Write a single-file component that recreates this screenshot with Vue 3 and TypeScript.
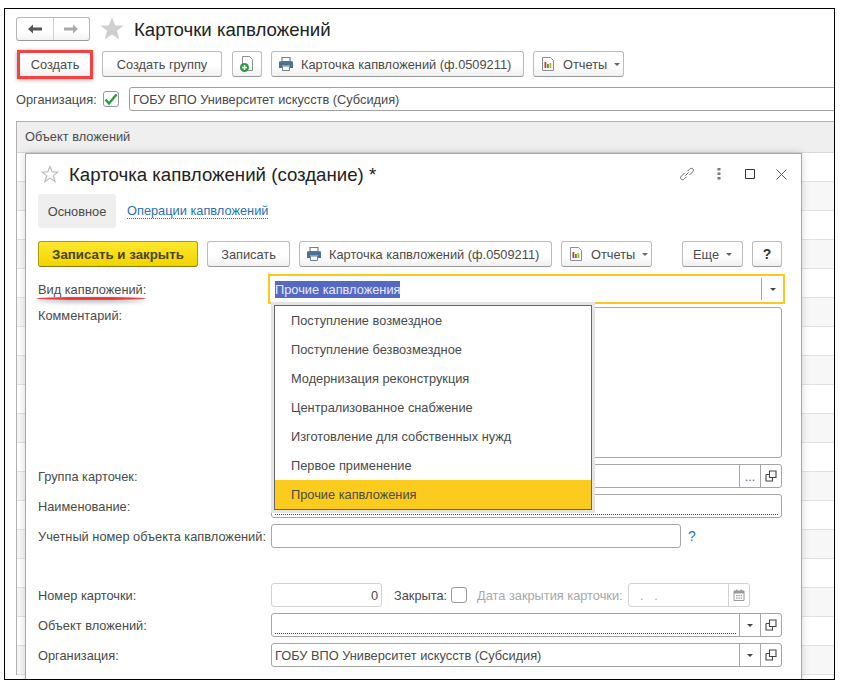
<template>
  <div class="frame">
    <svg class="defs" aria-hidden="true">
      <symbol id="printer" viewBox="0 0 16 16">
        <path d="M4 1.500h8v4H4z" fill="#fff" stroke="#6f8296" stroke-width="1.200" />
        <path d="M1 6.500c0-.8.500-1.200 1.200-1.200h11.600c.7 0 1.200.4 1.200 1.200V12h-3V9.500H4V12H1z" fill="#4a7299" />
        <path d="M4.500 10h7v4.500h-7z" fill="#fff" stroke="#6f8296" />
      </symbol>
      <symbol id="report" viewBox="0 0 16 16">
        <path d="M2.500 1.500h8l3 3v10h-11z" fill="#fff" stroke="#8a8f94" />
        <path d="M4.500 6h1.800v6H4.500z" fill="#c9342c" />
        <path d="M7 8h1.800v4H7z" fill="#3c9c35" />
        <path d="M9.500 7h1.800v5H9.500z" fill="#d9a514" />
      </symbol>
      <symbol id="open" viewBox="0 0 12 12">
        <path d="M4.500 1h6.500v6.500H4.500z M1 4.500h3.500 M1 4.500V11h6.500V7.500" fill="none" stroke="#444" stroke-width="1.100" />
      </symbol>
    </svg>

    <div class="nav-row">
      <div class="nav-buttons">
        <span class="nav-cell">
          <svg width="16" height="12" viewBox="0 0 16 12"><path d="M1 6l5-4.500V4.500h9v3H6v3z" fill="#555" /></svg>
        </span>
        <span class="nav-cell">
          <svg width="16" height="12" viewBox="0 0 16 12"><path d="M15 6l-5-4.500V4.500H1v3h9v3z" fill="#aaa" /></svg>
        </span>
      </div>
      <svg class="big-star" width="24" height="24" viewBox="0 0 24 24">
        <path d="M12 .5l3.300 8h8.400l-6.800 5.300 2.500 8.700L12 17.500l-7.400 5 2.500-8.700L.3 8.500h8.400z" fill="#cfcfcf" />
      </svg>
      <h1 class="title">Карточки капвложений</h1>
    </div>

    <div class="toolbar main-toolbar">
      <button class="btn btn-create">Создать</button>
      <button class="btn w-group">Создать группу</button>
      <button class="btn w-add">
        <svg width="16" height="18" viewBox="0 0 16 18">
          <path d="M3.500 1.500h7l3 3v11h-10z" fill="#fff" stroke="#8a8f94" />
          <circle cx="5.500" cy="12.500" r="4.500" fill="#2c9c3c" />
          <path d="M3 12.500h5M5.500 10v5" stroke="#fff" stroke-width="1.500" />
        </svg>
      </button>
      <button class="btn with-icon w-print">
        <svg class="ico" width="16" height="16"><use href="#printer" /></svg>
        Карточка капвложений (ф.0509211)
      </button>
      <button class="btn with-icon w-report">
        <svg class="ico" width="16" height="16"><use href="#report" /></svg>
        Отчеты
        <i class="caret"></i>
      </button>
    </div>

    <div class="org-row">
      <span class="org-label">Организация:</span>
      <span class="check checked">
        <svg width="14" height="13" viewBox="0 0 14 13"><path d="M1.500 6.500l3.500 4 7.500-9" fill="none" stroke="#1e9e46" stroke-width="2.400" /></svg>
      </span>
      <div class="org-input">ГОБУ ВПО Университет искусств (Субсидия)</div>
    </div>

    <div class="table">
      <div class="table-head">Объект вложений</div>
      <div v-for="n in 18" :key="n" class="table-row" :class="{ odd: n % 2 === 0 }"></div>
    </div>

    <div class="dialog">
      <div class="dialog-head">
        <svg class="small-star" width="18" height="18" viewBox="0 0 24 24">
          <path d="M12 2l3 7.300h7.500l-6 4.900 2.200 7.800-6.700-4.500L5.300 22l2.200-7.800-6-4.900H9z" fill="none" stroke="#bbb" stroke-width="1.600" />
        </svg>
        <h2 class="dialog-title">Карточка капвложений (создание) *</h2>
        <div class="win-icons">
          <svg width="16" height="16" viewBox="0 0 16 16">
            <path d="M6.500 9.500l3-3M5.500 7L2.500 10c-1.200 1.200-1.200 2.300-.4 3.100s2.200.9 3.400-.3l2-2M10.500 9l3-3c1.200-1.200 1.200-2.300.4-3.100s-2.200-.9-3.400.3l-2 2" fill="none" stroke="#666" />
          </svg>
          <svg class="dots" width="4" height="12" viewBox="0 0 4 12">
            <path d="M.5 0h3v2.500h-3zM.5 4.500h3V7h-3zM.5 9h3v2.500h-3z" fill="#777" />
          </svg>
          <svg class="square" width="10" height="10" viewBox="0 0 10 10"><path d="M.5.5h9v9h-9z" fill="none" stroke="#333" /></svg>
          <svg class="close" width="11" height="11" viewBox="0 0 11 11"><path d="M.5.500l10 10M10.500.500l-10 10" stroke="#555" /></svg>
        </div>
      </div>

      <div class="tabs">
        <span class="tab-active">Основное</span>
        <a class="tab-link">Операции капвложений</a>
      </div>

      <div class="toolbar dialog-toolbar">
        <button class="btn btn-primary">Записать и закрыть</button>
        <button class="btn w-save">Записать</button>
        <button class="btn with-icon w-print">
          <svg class="ico" width="16" height="16"><use href="#printer" /></svg>
          Карточка капвложений (ф.0509211)
        </button>
        <button class="btn with-icon w-report">
          <svg class="ico" width="16" height="16"><use href="#report" /></svg>
          Отчеты
          <i class="caret"></i>
        </button>
        <button class="btn w-more">Еще <i class="caret"></i></button>
        <button class="btn w-help">?</button>
      </div>

      <div class="form">
        <div class="row row-kind">
          <label class="lbl lbl-kind">Вид капвложений:</label>
          <div class="field kind-field">
            <span class="kind-value"><span class="selected">Прочие капвложения</span></span>
            <span class="kind-cell"><i class="caret dark"></i></span>
          </div>
        </div>

        <div class="row row-comment">
          <label class="lbl">Комментарий:</label>
          <div class="field comment"></div>
        </div>

        <div class="row">
          <label class="lbl">Группа карточек:</label>
          <div class="field">
            <span class="val"></span>
            <span class="cell dots-cell">...</span>
            <span class="cell"><svg width="12" height="12"><use href="#open" /></svg></span>
          </div>
        </div>

        <div class="row">
          <label class="lbl">Наименование:</label>
          <div class="field"><span class="val required"></span></div>
        </div>

        <div class="row">
          <label class="lbl">Учетный номер объекта капвложений:</label>
          <div class="field account"></div>
          <span class="hint">?</span>
        </div>

        <div class="row row-number">
          <label class="lbl">Номер карточки:</label>
          <div class="field number disabled">0</div>
          <span class="closed-label">Закрыта:</span>
          <span class="check closed-check"></span>
          <span class="date-label">Дата закрытия карточки:</span>
          <div class="field date disabled">
            <span class="val date-val">. &nbsp; .</span>
            <span class="cell">
              <svg width="12" height="12" viewBox="0 0 12 12">
                <path d="M1 2h10v9.500H1z" fill="none" stroke="#999" />
                <path d="M1 2h10v2.500H1zM3 .5h1.500V2H3zM7.500.5H9V2H7.500z" fill="#999" />
                <path d="M3 6h1.500v1.200H3zM5.300 6h1.500v1.200H5.300zM7.600 6h1.500v1.200H7.600zM3 8.500h1.500v1.200H3zM5.300 8.500h1.500v1.200H5.300zM7.600 8.500h1.500v1.200H7.600z" fill="#999" />
              </svg>
            </span>
          </div>
        </div>

        <div class="row">
          <label class="lbl">Объект вложений:</label>
          <div class="field">
            <span class="val required"></span>
            <span class="cell"><i class="caret dark"></i></span>
            <span class="cell"><svg width="12" height="12"><use href="#open" /></svg></span>
          </div>
        </div>

        <div class="row">
          <label class="lbl">Организация:</label>
          <div class="field">
            <span class="val">ГОБУ ВПО Университет искусств (Субсидия)</span>
            <span class="cell"><i class="caret dark"></i></span>
            <span class="cell"><svg width="12" height="12"><use href="#open" /></svg></span>
          </div>
        </div>
      </div>

      <ul class="dropdown">
        <li v-for="item in kinds" :key="item" :class="{ active: item === current }">{{ item }}</li>
      </ul>
    </div>
  </div>
</template>

<script setup lang="ts">
const current = 'Прочие капвложения'

const kinds: string[] = [
  'Поступление возмездное',
  'Поступление безвозмездное',
  'Модернизация реконструкция',
  'Централизованное снабжение',
  'Изготовление для собственных нужд',
  'Первое применение',
  current,
]
</script>

<style>
html,
body {
  margin: 0;
  background: #fff;
}
</style>

<style scoped>
.frame {
  position: relative;
  box-sizing: border-box;
  width: 831px;
  height: 672px;
  margin: 8px 0 0 4px;
  padding-top: 8px;
  border: 1px solid #000;
  overflow: hidden;
  font-family: "Liberation Sans", Arial, sans-serif;
  font-size: 12.8px;
  color: #4a4a4a;
  background: #fff;
}

.defs {
  position: absolute;
  width: 0;
  height: 0;
}

.nav-row {
  display: flex;
  align-items: center;
  height: 24px;
  padding-left: 11px;
}

.nav-buttons {
  display: flex;
  box-sizing: border-box;
  width: 74px;
  height: 24px;
  border: 1px solid #b5b5b5;
  border-bottom-color: #9a9a9a;
  border-radius: 3px;
  background: linear-gradient(#fff 60%, #f2f2f2);
}

.nav-cell {
  flex: 1;
  display: flex;
  align-items: center;
  justify-content: center;
}

.nav-cell + .nav-cell {
  border-left: 1px solid #d0d0d0;
}

.big-star {
  margin-left: 10px;
}

.title {
  margin: 2px 0 0 10px;
  font-size: 18.65px;
  font-weight: 400;
  color: #222;
}

.toolbar {
  display: flex;
  gap: 9px;
}

.main-toolbar {
  margin-top: 10px;
  padding-left: 11px;
}

.btn {
  display: flex;
  align-items: center;
  justify-content: center;
  box-sizing: border-box;
  height: 26px;
  padding: 0;
  border: 1px solid #bcbcbc;
  border-bottom-color: #999;
  border-radius: 3px;
  background: linear-gradient(#fff 55%, #f0f0f0);
  font: inherit;
  color: #4a4a4a;
}

.with-icon {
  justify-content: flex-start;
  padding-left: 6px;
  white-space: nowrap;
}

.btn-create {
  width: 76px;
  height: 29px;
  margin: -1px 0 -2px 1px;
  border: 3px solid #f04444;
  border-radius: 0;
  box-shadow: 0 1px 4px rgba(0, 0, 0, 0.35);
}

.w-group {
  width: 120px;
}

.w-add {
  width: 30px;
  margin-left: 1px;
}

.w-print {
  width: 253px;
}

.w-report {
  width: 91px;
}

.w-save {
  width: 83px;
}

.w-more {
  width: 61px;
  margin-left: 21px;
}

.w-help {
  width: 30px;
  font-size: 14px;
  font-weight: 700;
  color: #333;
}

.btn-primary {
  width: 160px;
  border-color: #b09a10;
  border-bottom-color: #8d7b10;
  background: linear-gradient(#ffe92e, #f2d300);
  font-size: 13.3px;
  font-weight: 700;
  color: #4a4418;
}

.ico {
  flex: none;
  margin-right: 7px;
}

.caret {
  width: 0;
  height: 0;
  margin-left: 7px;
  border: 3px solid transparent;
  border-top: 3px solid #666;
  border-bottom: 0;
}

.caret.dark {
  margin-left: 0;
  border-top-color: #444;
}

.org-row {
  display: flex;
  align-items: center;
  height: 24px;
  margin-top: 10px;
  padding-left: 11px;
}

.org-label {
  flex: none;
  width: 87px;
}

.check {
  box-sizing: border-box;
  display: flex;
  align-items: center;
  justify-content: center;
  flex: none;
  width: 16px;
  height: 16px;
  border: 1px solid #999;
  border-radius: 3px;
  background: #fff;
}

.org-input {
  display: flex;
  align-items: center;
  box-sizing: border-box;
  flex: 1;
  height: 24px;
  margin: 0 -4px 0 10px;
  padding-left: 3px;
  border: 1px solid #a0a0a0;
  border-radius: 3px;
}

.table {
  margin: 10px 0 0 11px;
  border-top: 1px solid #b0b0b0;
  border-left: 1px solid #b0b0b0;
}

.table-head {
  display: flex;
  align-items: center;
  box-sizing: border-box;
  height: 31px;
  padding: 0 0 2px 8px;
  background: #efefef;
  border-bottom: 1px solid #d8d8d8;
}

.table-row {
  box-sizing: border-box;
  height: 29px;
  border-bottom: 1px solid #e2e2e2;
}

.table-row.odd {
  background: #f7f7f7;
}

.dialog {
  position: absolute;
  left: 20px;
  top: 144px;
  bottom: -4px;
  box-sizing: border-box;
  width: 777px;
  padding: 0 19px 0 12px;
  border: 1px solid #a8a8a8;
  background: #fff;
  box-shadow: 0 0 8px rgba(0, 0, 0, 0.16);
}

.dialog-head {
  display: flex;
  align-items: center;
  height: 40px;
}

.small-star {
  margin-left: 3px;
}

.dialog-title {
  margin: 2px 0 0 10px;
  font-size: 18.65px;
  font-weight: 400;
  color: #222;
}

.win-icons {
  display: flex;
  align-items: center;
  margin-left: auto;
  margin-right: -5px;
}

.dots {
  margin-left: 22px;
}

.square {
  margin-left: 24px;
}

.close {
  margin-left: 21px;
}

.tabs {
  display: flex;
  align-items: center;
  height: 34px;
}

.tab-active {
  display: flex;
  align-items: center;
  justify-content: center;
  width: 78px;
  height: 34px;
  border-radius: 3px;
  background: #efefef;
}

.tab-link {
  margin-left: 11px;
  color: #2a6fb5;
  border-bottom: 1px dotted #2a6fb5;
}

.dialog-toolbar {
  margin-top: 13px;
}

.form {
  display: flex;
  flex-direction: column;
  gap: 6px;
  margin-top: 7px;
}

.row {
  display: flex;
  align-items: center;
  height: 24px;
}

.lbl {
  flex: none;
  width: 233px;
}

.field {
  display: flex;
  align-items: stretch;
  box-sizing: border-box;
  flex: 1;
  height: 24px;
  border: 1px solid #a6a6a6;
  border-radius: 3px;
  background: #fff;
}

.val {
  flex: 1;
  display: flex;
  align-items: center;
  padding-left: 3px;
}

.required {
  margin: 0 3px 2px;
  padding: 0;
  border-bottom: 1px dotted #d01010;
}

.cell {
  display: flex;
  align-items: center;
  justify-content: center;
  flex: none;
  width: 20px;
  border-left: 1px solid #a6a6a6;
}

.dots-cell {
  color: #666;
}

.row-kind {
  height: 30px;
  margin-bottom: -3px;
}

.lbl-kind {
  position: relative;
}

.lbl-kind::after {
  content: "";
  position: absolute;
  left: -2px;
  top: 15px;
  width: 110px;
  height: 3px;
  border-radius: 50%;
  background: #f03a40;
  box-shadow: 0 2px 4px rgba(0, 0, 0, 0.4);
}

.kind-field {
  height: 30px;
  margin: 0 -3px;
  border: 2px solid #fbc91e;
  border-radius: 0;
  align-items: center;
}

.kind-value {
  flex: 1;
  padding-left: 5px;
}

.selected {
  background: #5568c4;
  color: #e8ecff;
  padding: 1px 0;
}

.kind-cell {
  display: flex;
  align-items: center;
  justify-content: center;
  width: 21px;
  height: 22px;
  border-left: 1px solid #a6a6a6;
}

.row-comment {
  align-items: flex-start;
  height: 151px;
}

.comment {
  height: 151px;
}

.row-comment .lbl {
  margin-top: 1px;
}

.account {
  flex: none;
  width: 410px;
}

.hint {
  margin-left: 7px;
  font-size: 14px;
  color: #1f78c0;
}

.row-number {
  margin-top: 29px;
}

.number {
  flex: none;
  justify-content: flex-end;
  align-items: center;
  width: 111px;
  padding-right: 3px;
}

.disabled {
  border-color: #d2d2d2;
}

.disabled .cell {
  border-color: #d2d2d2;
}

.closed-label {
  flex: none;
  width: 50px;
  margin-left: 12px;
  white-space: nowrap;
}

.closed-check {
  margin-left: 7px;
}

.date-label {
  flex: none;
  width: 146px;
  margin-left: 10px;
  color: #a8a8a8;
  white-space: nowrap;
}

.date {
  flex: none;
  width: 122px;
  margin-left: 5px;
}

.date-val {
  padding-left: 11px;
  color: #a8a8a8;
}

.dropdown {
  position: absolute;
  left: 248px;
  top: 151px;
  box-sizing: border-box;
  width: 318px;
  margin: 0;
  padding: 0;
  list-style: none;
  border: 1px solid #666;
  background: #fff;
  box-shadow: 0 0 0 3px #e4e4e4;
}

.dropdown li {
  display: flex;
  align-items: center;
  height: 29px;
  padding-left: 16px;
}

.dropdown li.active {
  background: #fbcc1d;
}
</style>
